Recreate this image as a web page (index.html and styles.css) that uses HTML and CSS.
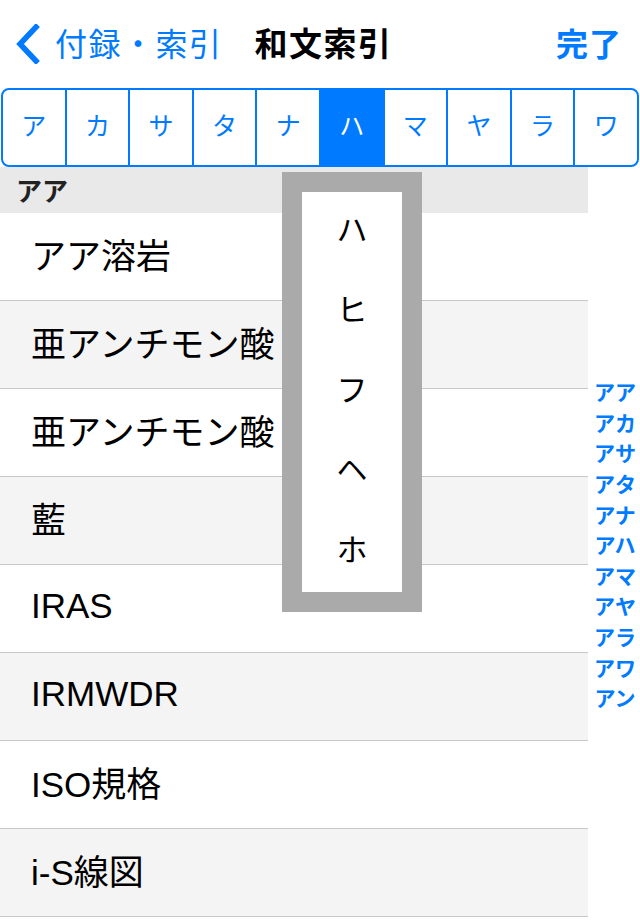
FILE: index.html
```html
<!DOCTYPE html>
<html lang="ja">
<head>
<meta charset="utf-8">
<link rel="stylesheet" href="styles.css">
</head>
<body>
<div class="screen">
  <header class="nav">
    <div class="back">
      <svg class="chevron" width="26" height="40" viewBox="0 0 26 40"><polyline points="22,3 6,20 22,37" fill="none" stroke="#007aff" stroke-width="5.5" stroke-linecap="square" stroke-linejoin="miter"/></svg>
      <span class="back-label">付録・索引</span>
    </div>
    <div class="title">和文索引</div>
    <div class="done">完了</div>
  </header>
  <div class="segments">
    <div class="seg">ア</div>
    <div class="seg">カ</div>
    <div class="seg">サ</div>
    <div class="seg">タ</div>
    <div class="seg">ナ</div>
    <div class="seg active">ハ</div>
    <div class="seg">マ</div>
    <div class="seg">ヤ</div>
    <div class="seg">ラ</div>
    <div class="seg">ワ</div>
  </div>
  <div class="content">
    <div class="list">
      <div class="section">アア</div>
      <div class="row">アア溶岩</div>
      <div class="row alt">亜アンチモン酸</div>
      <div class="row">亜アンチモン酸</div>
      <div class="row alt">藍</div>
      <div class="row">IRAS</div>
      <div class="row alt">IRMWDR</div>
      <div class="row">ISO規格</div>
      <div class="row alt">i-S線図</div>
    </div>
    <div class="index">
      <span>アア</span><span>アカ</span><span>アサ</span><span>アタ</span><span>アナ</span><span>アハ</span><span>アマ</span><span>アヤ</span><span>アラ</span><span>アワ</span><span>アン</span>
    </div>
    <div class="popup">
      <div class="popup-inner">
        <div class="kana">ハ</div>
        <div class="kana">ヒ</div>
        <div class="kana">フ</div>
        <div class="kana">ヘ</div>
        <div class="kana">ホ</div>
      </div>
    </div>
  </div>
</div>
</body>
</html>
```

FILE: styles.css
```css
* { box-sizing: border-box; }
html, body { margin: 0; padding: 0; background: #fff; }
body {
  font-family: "Liberation Sans", "Noto Sans CJK JP", sans-serif;
  width: 640px;
  height: 920px;
  overflow: hidden;
}
.screen { width: 640px; height: 920px; position: relative; }

.nav {
  height: 88px;
  display: flex;
  align-items: center;
  padding: 0 18px 4px 14px;
  font-family: "Noto Sans CJK JP", sans-serif;
  font-size: 32px;
}
.back { display: flex; align-items: center; color: #007aff; }
.chevron { display: block; margin-right: 15px; margin-top: 4px; }
.back-label { line-height: 1; letter-spacing: 1.5px; }
.title { margin-left: 32px; font-weight: bold; color: #000; letter-spacing: 1.5px; line-height: 1; font-size: 33px; }
.done { margin-left: auto; font-weight: bold; color: #007aff; line-height: 1; letter-spacing: 1px; }

.segments {
  margin: 0 1px;
  height: 79px;
  border: 2px solid #007aff;
  border-radius: 8px;
  display: flex;
  overflow: hidden;
  font-family: "Noto Sans CJK JP", sans-serif;
}
.seg {
  flex: 1;
  display: flex;
  align-items: center;
  justify-content: center;
  color: #007aff;
  font-size: 25px;
  padding-bottom: 7px;
  border-left: 2px solid #007aff;
}
.seg:first-child { border-left: none; }
.seg.active { background: #007aff; color: #fff; }

.content {
  position: relative;
  display: flex;
  height: 753px;
}
.list { width: 588px; }
.section {
  height: 46px;
  background: #e9e9e9;
  font-family: "Noto Sans CJK JP", sans-serif;
  font-weight: bold;
  font-size: 26px;
  color: #222;
  padding-left: 16px;
  padding-bottom: 2px;
  display: flex;
  align-items: center;
}
.row {
  height: 88px;
  border-bottom: 1px solid #c8c8c8;
  background: #fff;
  font-size: 35px;
  color: #000;
  padding-left: 31px;
  padding-bottom: 6px;
  display: flex;
  align-items: center;
  white-space: nowrap;
}
.row.alt { background: #f4f4f4; }

.index {
  flex: 1;
  display: flex;
  flex-direction: column;
  justify-content: center;
  align-items: center;
  font-family: "Noto Sans CJK JP", sans-serif;
  font-weight: bold;
  font-size: 21px;
  color: #007aff;
  padding-top: 2px;
  padding-left: 2px;
}
.index span { height: 30.6px; line-height: 30.6px; }

.popup {
  position: absolute;
  left: 282px;
  top: 5px;
  width: 140px;
  height: 440px;
  background: #aaaaaa;
  padding: 20px;
}
.popup-inner {
  background: #fff;
  height: 400px;
  display: flex;
  flex-direction: column;
  overflow: hidden;
}
.kana {
  height: 80px;
  flex: none;
  display: flex;
  align-items: center;
  justify-content: center;
  font-family: "Noto Sans CJK JP", sans-serif;
  font-size: 31px;
  color: #000;
}
.kana:first-child { margin-top: -5px; }
```
